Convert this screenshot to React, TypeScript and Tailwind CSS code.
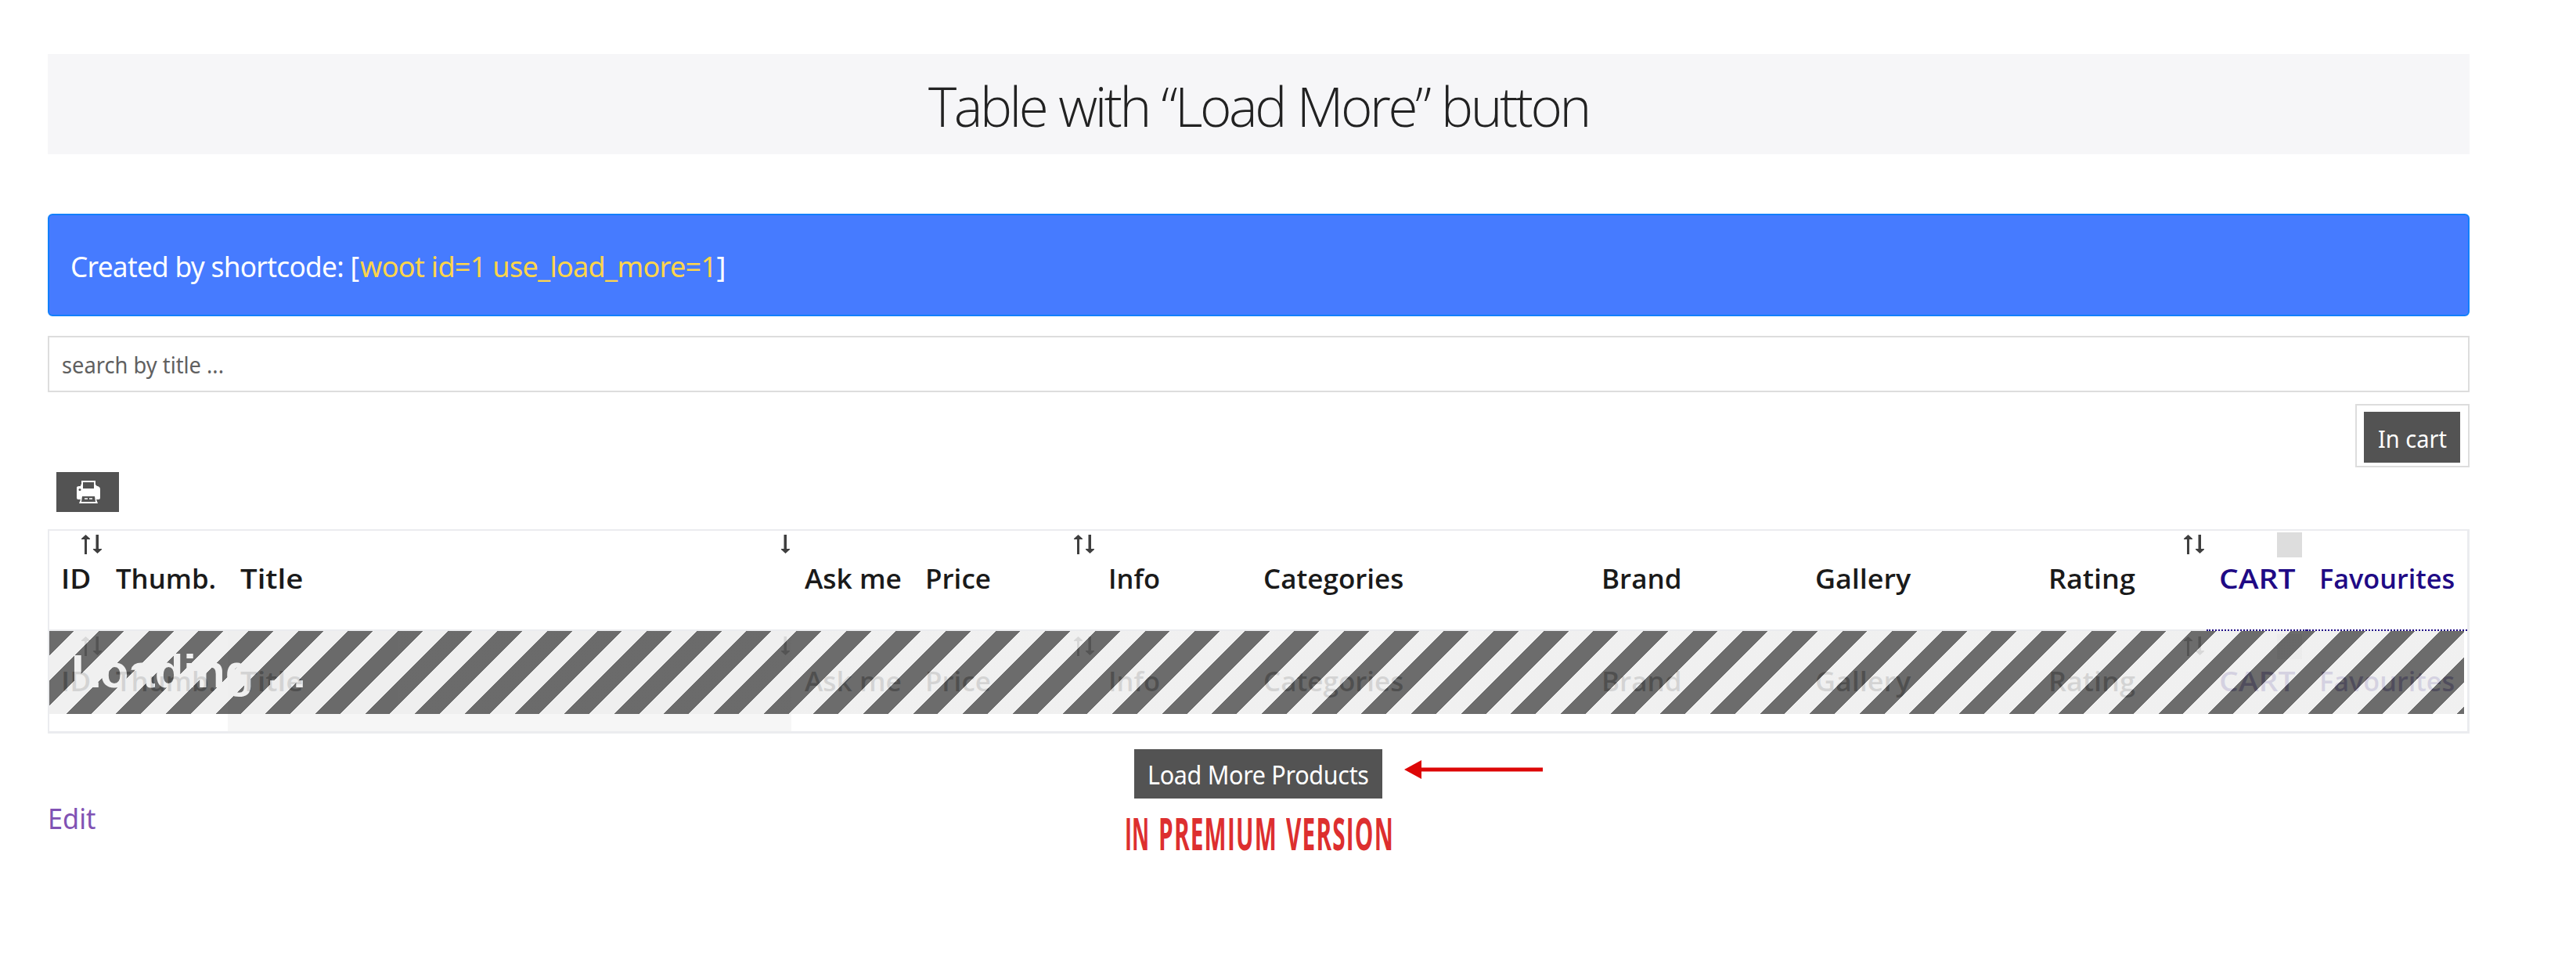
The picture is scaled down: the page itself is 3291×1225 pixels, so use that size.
import { useLayoutEffect, useRef, useState } from "react";

function Fit({ w, className, children }: { w: number; className: string; children: React.ReactNode }) {
  const ref = useRef<HTMLSpanElement>(null);
  const [scale, setScale] = useState(1);
  useLayoutEffect(() => {
    if (ref.current) setScale(w / ref.current.offsetWidth);
  }, [w]);
  return (
    <span ref={ref} className={`inline-block origin-left whitespace-nowrap ${className}`} style={{ transform: `scaleX(${scale})` }}>
      {children}
    </span>
  );
}

type Column = { label: string; width: string; pad: string; text: number; sort?: "both" | "down" | "box"; sortPos?: string; link?: boolean };

const columns: Column[] = [
  { label: "ID", width: "w-[68px]", pad: "pl-[15px]", text: 38, sort: "both", sortPos: "left-[41px]" },
  { label: "Thumb.", width: "w-[160px]", pad: "pl-[17px]", text: 128 },
  { label: "Title", width: "w-[720px]", pad: "pl-[16px]", text: 80, sort: "down", sortPos: "left-[707px]" },
  { label: "Ask me", width: "w-[156px]", pad: "pl-[17px]", text: 124 },
  { label: "Price", width: "w-[233px]", pad: "pl-[15px]", text: 84, sort: "both", sortPos: "left-[205px]" },
  { label: "Info", width: "w-[97px]", pad: "pl-[16px]", text: 66 },
  { label: "Categories", width: "w-[534px]", pad: "pl-[117px]", text: 179 },
  { label: "Brand", width: "w-[218px]", pad: "pl-[15px]", text: 103 },
  { label: "Gallery", width: "w-[300px]", pad: "pl-[70px]", text: 122 },
  { label: "Rating", width: "w-[270px]", pad: "pl-[68px]", text: 111, sort: "both", sortPos: "left-[241px]" },
  { label: "CART", width: "w-[128px]", pad: "pl-[16px]", text: 97, sort: "box", sortPos: "left-[90px]", link: true },
  { label: "Favourites", width: "w-[205px]", pad: "pl-[16px]", text: 173, link: true },
];

function SortIcon({ kind }: { kind: "both" | "down" }) {
  return (
    <svg width="28" height="26" viewBox="0 0 28 26" fill="#3f3f3f">
      {kind === "both" && <path d="M4 25V6H0V5L5.500 0L11 5V6H7V25Z" />}
      {kind === "both" ? <path d="M18.500 0H22V18H26V19L20.500 24L15 19V18H18.500Z" /> : <path d="M3.500 0H7V18H11V19L5.500 24L0 19V18H3.500Z" />}
    </svg>
  );
}

function HeaderRow({ head }: { head?: boolean }) {
  return (
    <div className="flex h-[128px]">
      {columns.map((c) => (
        <div
          key={c.label}
          className={`relative shrink-0 ${c.width} ${c.pad} ${
            head
              ? c.link
                ? "border-b-2 border-dotted border-[#1f0a85] pt-[37px]"
                : "border-b-2 border-[#ebecef] pt-[37px]"
              : c.label === "Title"
                ? "bg-[#f6f6f6] pt-[40px]"
                : "pt-[40px]"
          } ${c.link ? "text-[#1f0a85]" : "text-[#1a1a1a]"}`}
        >
          <Fit w={c.text} className="font-['Open_Sans'] text-[35px] leading-[48px] font-semibold">
            {c.label}
          </Fit>
          {c.sort && (
            <span
              className={`absolute ${
                c.sort === "box" ? (head ? "top-[2px]" : "top-[4px]") : head ? "top-[5px]" : "top-[7px]"
              } ${c.sortPos}`}
            >
              {c.sort === "box" ? <span className="block size-8 bg-[#ddd]" /> : <SortIcon kind={c.sort} />}
            </span>
          )}
        </div>
      ))}
    </div>
  );
}

export default function App() {
  return (
    <div className="h-[1225px] w-[3291px] bg-white pt-[69px] pr-[136px] pl-[61px] font-['Open_Sans',sans-serif]">
      <h1 className="flex h-[128px] items-center justify-center bg-[#f6f6f8] pt-[4px] text-[#222]">
        <span className="flex w-[844px]">
          <Fit w={844} className="text-[70px] leading-[90px] font-light tracking-[-0.05em] [word-spacing:0.02em]">
            Table with “Load More” button
          </Fit>
        </span>
      </h1>

      <div className="mt-[76px] flex h-[131px] items-center rounded-[6px] border-2 border-[#1280fb] bg-[#467bff] pt-[5px] pl-[27px] text-white">
        <span className="w-[370px]">
          <Fit w={368} className="font-['Noto_Sans'] text-[36px] leading-[48px] tracking-[-0.02em]">
            Created by shortcode: [
          </Fit>
        </span>
        <Fit w={467} className="font-['Noto_Sans'] text-[36px] leading-[48px] tracking-[-0.02em]">
          <span className="text-[#ffd54a]">woot id=1 use_load_more=1</span>]
        </Fit>
      </div>

      <div className="mt-[25px] flex h-[72px] items-center border-2 border-[#ddd] pt-[2px] pl-[16px] text-[#606060]">
        <Fit w={207} className="font-['Noto_Sans'] text-[29px] leading-[40px]">search by title ...</Fit>
      </div>

      <div className="mt-[15px] flex justify-end">
        <div className="h-[81px] w-[146px] border-2 border-[#ddd] pt-[8px] pl-[9px]">
          <button className="flex h-[65px] w-[123px] items-center bg-[#535353] pt-[2px] pl-[18px] text-white">
            <Fit w={88} className="font-['Noto_Sans'] text-[31px] leading-[40px]">In cart</Fit>
          </button>
        </div>
      </div>

      <button className="mt-[6px] ml-[11px] flex h-[51px] w-[80px] items-center justify-center bg-[#535353]">
        <svg width="32" height="30" viewBox="0 0 32 30" className="mt-px ml-px">
          <path d="M7 0H25V5L27 7H28Q31 8 31 11V22Q31 24 29 24H26L28 29H4L6 24H3Q1 24 1 22V9Q1 7 4 7H6V5H7Z" fill="#fff" />
          <path d="M9 2H23V10H9ZM8 20H24L25 27H7Z" fill="#535353" />
          <path d="M11 23H15M17 23H21" stroke="#fff" strokeWidth="1.500" />
          <circle cx="5" cy="11.500" r="1.500" fill="#535353" />
        </svg>
      </button>

      <div className="relative mt-[22px] h-[261px] border-t-2 border-r-3 border-b-3 border-l-2 border-[#ebecef]">
        <HeaderRow head />
        <HeaderRow />
        <div className="absolute top-[128px] left-0 h-[106px] w-[3085px] bg-[repeating-linear-gradient(135deg,#575757_0_22.5px,#eeeeee_22.5px_45px)] pt-[12px] pl-[28px] font-['Liberation_Sans',sans-serif] text-[60px] leading-[80px] font-bold text-[#eee] opacity-[0.875]">
          Loading ...
        </div>
      </div>

      <div className="relative mt-[20px] flex">
        <button className="ml-[1388px] flex h-[63px] w-[317px] items-center bg-[#535353] pt-[3px] pl-[17px] text-white">
          <Fit w={283} className="font-['Noto_Sans'] text-[32px] leading-[44px] tracking-[-0.01em]">Load More Products</Fit>
        </button>
        <svg className="mt-[14px] ml-[28px]" width="178" height="26" viewBox="0 0 178 26">
          <path d="M0 12L22 0V24Z" fill="#dd0606" />
          <path d="M20 12H177" stroke="#dd0606" strokeWidth="5" />
        </svg>
      </div>

      <div className="flex h-[80px]">
        <a className="w-[1376px] pt-[2px] text-[#8052b4]">
          <Fit w={61} className="font-['Noto_Sans'] text-[36px] leading-[48px]">Edit</Fit>
        </a>
        <div className="flex pt-[9px] font-['Open_Sans'] text-[58px] leading-[70px] font-bold text-[#dd2f2f]">
          <span className="w-[43px]">
            <Fit w={31} className="">IN</Fit>
          </span>
          <span className="w-[163px]">
            <Fit w={152} className="tracking-[0.04em]">PREMIUM</Fit>
          </span>
          <span className="w-[138px]">
            <Fit w={138} className="tracking-[0.04em]">VERSION</Fit>
          </span>
        </div>
      </div>
    </div>
  );
}
